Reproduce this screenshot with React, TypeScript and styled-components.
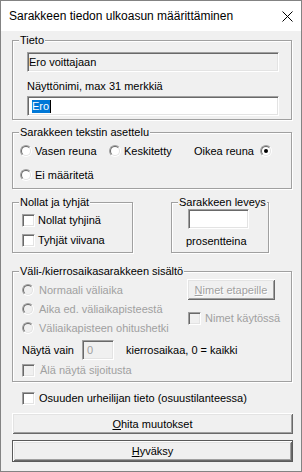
import React from 'react';
import styled, { createGlobalStyle, css } from 'styled-components';

const GlobalStyle = createGlobalStyle`
  html, body {
    margin: 0;
    padding: 0;
    background: #ffffff;
  }
  body {
    font-family: "Liberation Sans", Arial, sans-serif;
    font-size: 11px;
    color: #000000;
  }
  * {
    box-sizing: border-box;
  }
`;

type OptionProps = {
  label: string;
  checked?: boolean;
  disabled?: boolean;
  right?: boolean;
  gap?: number;
};

const RadioOption: React.FC<OptionProps> = ({ label, checked, disabled, right, gap = 3 }) => (
  <Option $right={right} $disabled={disabled} $gap={gap}>
    <RadioMark $checked={checked} $disabled={disabled} />
    <span>{label}</span>
  </Option>
);

const CheckOption: React.FC<OptionProps> = ({ label, checked, disabled, gap = 3 }) => (
  <Option $disabled={disabled} $gap={gap}>
    <CheckMark $checked={checked} $disabled={disabled} />
    <span>{label}</span>
  </Option>
);

const CloseIcon = () => (
  <svg width="11" height="11" viewBox="0 0 11 11">
    <path d="M0.5 0.5 L10.5 10.5 M10.5 0.5 L0.5 10.5" stroke="#000" strokeWidth="1" fill="none" />
  </svg>
);

export default function App() {
  return (
    <>
      <GlobalStyle />
      <Window>
        <TitleBar>
          <TitleText>Sarakkeen tiedon ulkoasun määrittäminen</TitleText>
          <CloseIcon />
        </TitleBar>

        <Body>
          <Group>
            <Caption>Tieto</Caption>
            <TietoBody>
              <Field $readOnly>Ero voittajaan</Field>
              <FieldLabel>Näyttönimi, max 31 merkkiä</FieldLabel>
              <Field $pad={4}>
                <Selected>Ero</Selected>
                <Caret />
              </Field>
            </TietoBody>
          </Group>

          <Group $mt={6}>
            <Caption>Sarakkeen tekstin asettelu</Caption>
            <AlignGrid>
              <RadioOption label="Vasen reuna" />
              <RadioOption label="Keskitetty" />
              <RadioOption label="Oikea reuna" checked right gap={6} />
              <RadioOption label="Ei määritetä" />
            </AlignGrid>
          </Group>

          <SplitRow>
            <Group $width={121}>
              <Caption>Nollat ja tyhjät</Caption>
              <StackBody>
                <CheckOption label="Nollat tyhjinä" />
                <CheckOption label="Tyhjät viivana" />
              </StackBody>
            </Group>
            <Group $width={98}>
              <Caption>Sarakkeen leveys</Caption>
              <WidthBody>
                <WidthField />
                <FieldLabel $mt={6}>prosentteina</FieldLabel>
              </WidthBody>
            </Group>
          </SplitRow>

          <Group $mt={12}>
            <Caption>Väli-/kierrosaikasarakkeen sisältö</Caption>
            <SplitBody>
              <SplitTop>
                <SplitOptions>
                  <RadioOption label="Normaali väliaika" disabled gap={5} />
                  <RadioOption label="Aika ed. väliaikapisteestä" disabled gap={5} />
                  <RadioOption label="Väliaikapisteen ohitushetki" disabled gap={5} />
                </SplitOptions>
                <SplitSide>
                  <Button $width={88} $height={21} disabled>
                    <u>N</u>imet etapeille
                  </Button>
                  <SideCheck>
                    <CheckOption label="Nimet käytössä" disabled gap={4} />
                  </SideCheck>
                </SplitSide>
              </SplitTop>
              <ShowRow>
                <span>Näytä vain</span>
                <LapField>0</LapField>
                <span>kierrosaikaa, 0 = kaikki</span>
              </ShowRow>
              <RowSpacer $mt={2}>
                <CheckOption label="Älä näytä sijoitusta" disabled gap={5} />
              </RowSpacer>
            </SplitBody>
          </Group>

          <LegRow>
            <CheckOption label="Osuuden urheilijan tieto (osuustilanteessa)" gap={4} />
          </LegRow>

          <Button $height={21} $mt={7}>
            <u>O</u>hita muutokset
          </Button>
          <Button $height={22} $mt={6} $default>
            <u>H</u>yväksy
          </Button>
        </Body>
      </Window>
    </>
  );
}

const Window = styled.div`
  width: 302px;
  height: 472px;
  border: 1px solid #838383;
  background: #f0f0f0;
  display: flex;
  flex-direction: column;
  overflow: hidden;
`;

const TitleBar = styled.div`
  height: 30px;
  flex-shrink: 0;
  background: #ffffff;
  display: flex;
  align-items: center;
  justify-content: space-between;
  padding: 0 8px 0 8px;
`;

const TitleText = styled.span`
  font-size: 12px;
  color: #000000;
`;

const Body = styled.div`
  display: flex;
  flex-direction: column;
  padding: 3px 8px 0 11px;
`;

const Group = styled.fieldset<{ $width?: number; $mt?: number }>`
  margin: ${(p) => p.$mt ?? 0}px 1px 0 0;
  padding: 0;
  min-width: 0;
  border: 1px solid #a0a0a0;
  box-shadow: inset 1px 1px 0 #ffffff, 1px 1px 0 #ffffff;
  ${(p) =>
    p.$width &&
    css`
      width: ${p.$width}px;
      margin-right: 0;
    `}
`;

const Caption = styled.legend`
  margin-left: 6px;
  padding: 0 1px;
  font-size: 11px;
  line-height: 13px;
  background: #f0f0f0;
  white-space: nowrap;
`;

const TietoBody = styled.div`
  display: flex;
  flex-direction: column;
  padding: 5px 12px 3px 14px;
`;

const sunken = css`
  border: 1px solid;
  border-color: #a0a0a0 #ffffff #ffffff #a0a0a0;
  box-shadow: inset 1px 1px 0 #696969, inset -1px -1px 0 #e3e3e3;
`;

const Field = styled.div<{ $readOnly?: boolean; $pad?: number }>`
  ${sunken};
  height: 20px;
  display: flex;
  align-items: center;
  padding-left: ${(p) => p.$pad ?? 1}px;
  background: ${(p) => (p.$readOnly ? '#f0f0f0' : '#ffffff')};
  white-space: nowrap;
`;

const FieldLabel = styled.div<{ $mt?: number }>`
  line-height: 13px;
  margin: ${(p) => p.$mt ?? 8}px 0 3px;
  white-space: nowrap;
`;

const Selected = styled.span`
  background: #0078d7;
  color: #ffffff;
  line-height: 13px;
  padding: 0 1px 0 0;
`;

const Caret = styled.span`
  width: 1px;
  height: 13px;
  background: #000000;
`;

const AlignGrid = styled.div`
  display: grid;
  grid-template-columns: 89px 84px auto;
  row-gap: 8px;
  padding: 4px 0 5px 7px;
`;

const Option = styled.label<{ $right?: boolean; $disabled?: boolean; $gap: number }>`
  display: flex;
  align-items: center;
  height: 16px;
  gap: ${(p) => p.$gap}px;
  white-space: nowrap;
  color: ${(p) => (p.$disabled ? '#a0a0a0' : '#000000')};
  ${(p) =>
    p.$right &&
    css`
      flex-direction: row-reverse;
      justify-content: flex-end;
      padding-left: 1px;
    `}
`;

const RadioMark = styled.span<{ $checked?: boolean; $disabled?: boolean }>`
  position: relative;
  flex-shrink: 0;
  width: 12px;
  height: 12px;
  border-radius: 50%;
  border: 1px solid;
  border-color: #a0a0a0 #ffffff #ffffff #a0a0a0;
  &::before {
    content: '';
    position: absolute;
    inset: 0;
    border-radius: 50%;
    border: 1px solid;
    border-color: #696969 #e3e3e3 #e3e3e3 #696969;
    background: ${(p) => (p.$disabled ? '#f0f0f0' : '#ffffff')};
  }
  ${(p) =>
    p.$checked &&
    css`
      &::after {
        content: '';
        position: absolute;
        left: 3px;
        top: 3px;
        width: 4px;
        height: 4px;
        border-radius: 50%;
        background: #000000;
      }
    `}
`;

const CheckMark = styled.span<{ $checked?: boolean; $disabled?: boolean }>`
  flex-shrink: 0;
  width: 13px;
  height: 13px;
  ${sunken};
  background: ${(p) => (p.$disabled ? '#f0f0f0' : '#ffffff')};
`;

const SplitRow = styled.div`
  display: flex;
  gap: 38px;
  margin-top: 7px;
`;

const StackBody = styled.div`
  display: flex;
  flex-direction: column;
  gap: 4px;
  padding: 3px 0 4px 9px;
`;

const WidthBody = styled.div`
  display: flex;
  flex-direction: column;
  align-items: flex-start;
  padding: 0 0 1px 14px;
`;

const WidthField = styled.div`
  ${sunken};
  width: 61px;
  height: 20px;
  margin-left: 2px;
  background: #ffffff;
`;

const SplitBody = styled.div`
  display: flex;
  flex-direction: column;
  padding: 0 0 3px 9px;
`;

const SplitTop = styled.div`
  display: grid;
  grid-template-columns: 165px auto;
  align-items: start;
`;

const SplitOptions = styled.div`
  display: flex;
  flex-direction: column;
  gap: 3px;
  padding-top: 4px;
`;

const SplitSide = styled.div`
  display: flex;
  flex-direction: column;
  align-items: flex-start;
  padding-top: 1px;
`;

const SideCheck = styled.div`
  margin: 10px 0 0 1px;
`;

const ShowRow = styled.div`
  display: flex;
  align-items: center;
  height: 20px;
  margin-top: 4px;
  white-space: nowrap;
`;

const LapField = styled.div`
  ${sunken};
  width: 32px;
  height: 20px;
  margin: 0 12px 0 8px;
  padding-left: 4px;
  display: flex;
  align-items: center;
  color: #a0a0a0;
  background: #f0f0f0;
`;

const RowSpacer = styled.div<{ $mt: number }>`
  margin-top: ${(p) => p.$mt}px;
`;

const LegRow = styled.div`
  margin-top: 8px;
  padding-left: 10px;
`;

const Button = styled.button<{ $width?: number; $height: number; $mt?: number; $default?: boolean }>`
  width: ${(p) => (p.$width ? `${p.$width}px` : '100%')};
  height: ${(p) => p.$height}px;
  margin-top: ${(p) => p.$mt ?? 0}px;
  padding: 0;
  font-family: "Liberation Sans", Arial, sans-serif;
  font-size: 11px;
  color: #000000;
  background: #f0f0f0;
  border: none;
  box-shadow: inset 1px 1px 0 #ffffff, inset -1px -1px 0 #696969, inset 2px 2px 0 #e3e3e3,
    inset -2px -2px 0 #a0a0a0;
  ${(p) =>
    p.$default &&
    css`
      border: 1px solid #5a5a5a;
    `}
  &:disabled {
    color: #a0a0a0;
    text-shadow: 1px 1px 0 #ffffff;
  }
`;
